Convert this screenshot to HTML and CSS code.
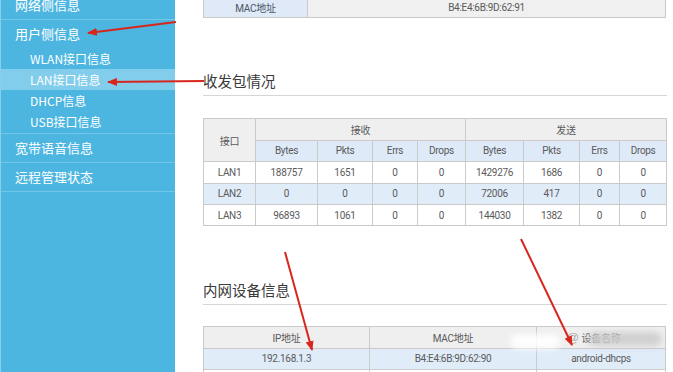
FILE: index.html
```html
<!DOCTYPE html>
<html lang="zh-CN">
<head>
<meta charset="utf-8">
<title>LAN接口信息</title>
<link rel="stylesheet" href="styles.css">
</head>
<body>
<div class="page">
  <aside class="sidebar">
    <ul class="menu">
      <li class="menu-item sep">网络侧信息</li>
      <li class="menu-item">用户侧信息</li>
      <li class="submenu sep">
        <div class="sub-item">WLAN接口信息</div>
        <div class="sub-item active">LAN接口信息</div>
        <div class="sub-item">DHCP信息</div>
        <div class="sub-item">USB接口信息</div>
      </li>
      <li class="menu-item sep">宽带语音信息</li>
      <li class="menu-item sep">远程管理状态</li>
    </ul>
  </aside>
  <main class="main">
    <table class="grid info">
      <colgroup><col class="c-label"><col></colgroup>
      <tr><td class="label">MAC地址</td><td class="value">B4:E4:6B:9D:62:91</td></tr>
    </table>

    <h2 class="section-title first">收发包情况</h2>
    <table class="grid stats">
      <colgroup>
        <col style="width:52px"><col style="width:62px"><col style="width:55px"><col style="width:45px"><col style="width:48px">
        <col style="width:58px"><col style="width:56px"><col style="width:40px"><col style="width:47px">
      </colgroup>
      <tr class="head">
        <td rowspan="2">接口</td>
        <td colspan="4">接收</td>
        <td colspan="4">发送</td>
      </tr>
      <tr class="sub">
        <td>Bytes</td><td>Pkts</td><td>Errs</td><td>Drops</td>
        <td>Bytes</td><td>Pkts</td><td>Errs</td><td>Drops</td>
      </tr>
      <tr><td>LAN1</td><td>188757</td><td>1651</td><td>0</td><td>0</td><td>1429276</td><td>1686</td><td>0</td><td>0</td></tr>
      <tr class="alt"><td>LAN2</td><td>0</td><td>0</td><td>0</td><td>0</td><td>72006</td><td>417</td><td>0</td><td>0</td></tr>
      <tr><td>LAN3</td><td>96893</td><td>1061</td><td>0</td><td>0</td><td>144030</td><td>1382</td><td>0</td><td>0</td></tr>
    </table>

    <h2 class="section-title second">内网设备信息</h2>
    <table class="grid devices">
      <colgroup><col style="width:166px"><col style="width:167px"><col></colgroup>
      <tr class="head"><td>IP地址</td><td>MAC地址</td><td>设备名称</td></tr>
      <tr class="alt"><td>192.168.1.3</td><td>B4:E4:6B:9D:62:90</td><td>android-dhcps</td></tr>
      <tr><td></td><td></td><td></td></tr>
    </table>
  </main>

  <div class="watermark">
    <span class="wm-blob wm-white"></span>
    <span class="wm-blob wm-gray"></span>
    <span class="wm-at">@</span>
  </div>

  <svg class="arrows" width="673" height="372" viewBox="0 0 673 372" aria-hidden="true">
    <defs>
      <marker id="head" viewBox="0 0 10 8" refX="9" refY="4" markerWidth="10" markerHeight="8" markerUnits="userSpaceOnUse" orient="auto">
        <path d="M0 0 L10 4 L0 8 Z" fill="#d8261d"/>
      </marker>
    </defs>
    <line x1="176" y1="22" x2="88" y2="33" stroke="#d8261d" stroke-width="1.8" marker-end="url(#head)"/>
    <line x1="204" y1="81" x2="108" y2="82" stroke="#d8261d" stroke-width="1.8" marker-end="url(#head)"/>
    <line x1="285" y1="252" x2="312" y2="350" stroke="#d8261d" stroke-width="2" marker-end="url(#head)"/>
    <line x1="521" y1="239" x2="572" y2="345" stroke="#d8261d" stroke-width="2" marker-end="url(#head)"/>
  </svg>
</div>
</body>
</html>
```

FILE: styles.css
```css
html, body {
  margin: 0;
  padding: 0;
  background: #ffffff;
}

.page {
  position: relative;
  display: flex;
  height: 372px;
  overflow: hidden;
  font-family: "Noto Sans", "Noto Sans CJK SC", sans-serif;
}

/* ---------- sidebar ---------- */
.sidebar {
  width: 174px;
  flex: none;
  background: #4cb6e1;
  border-left: 1px solid #86d0ee;
  color: #ffffff;
}

.menu {
  list-style: none;
  margin: -9px 0 0 0;
  padding: 0;
}

.menu-item {
  height: 28px;
  line-height: 28px;
  padding-left: 14px;
  font-size: 13px;
  font-family: "Noto Sans CJK SC", sans-serif;
}

.sep {
  border-bottom: 1px solid #72c6e8;
}

.submenu {
  padding-bottom: 1px;
}

.sub-item {
  height: 21px;
  line-height: 21px;
  padding-left: 29px;
  font-size: 12px;
  font-family: "Noto Sans CJK SC", sans-serif;
}

.sub-item.active {
  background: #82cdec;
}

/* ---------- main ---------- */
.main {
  flex: 1;
  padding: 0 7px 0 28px;
}

.grid {
  width: 463px;
  border-collapse: collapse;
  table-layout: fixed;
  font-family: "Roboto", "Noto Sans CJK SC", sans-serif;
  font-size: 10px;
  letter-spacing: -0.3px;
  color: #5a5a5a;
}

.grid td {
  border: 1px solid #cacaca;
  text-align: center;
  height: 20.4px;
  padding: 0;
  white-space: nowrap;
  overflow: hidden;
}

.info {
  margin-top: -4px;
}

.info .c-label {
  width: 104px;
}

.info .label {
  background: #dfe9f7;
  color: #4a5566;
}

.info .value {
  background: #f0f0f0;
}

.section-title {
  margin: 0;
  font-weight: normal;
  font-size: 14.5px;
  line-height: 20px;
  color: #3a3a3a;
  font-family: "Noto Sans CJK SC", sans-serif;
  padding-bottom: 4px;
  border-bottom: 1px solid #d6d6d6;
}

.section-title.first {
  margin-top: 53px;
  margin-bottom: 22px;
}

.section-title.second {
  margin-top: 54px;
  margin-bottom: 21px;
}

.stats .head td {
  background: #efefef;
}

.stats .sub td {
  background: #dfeaf8;
}

.grid .alt td {
  background: #e1ecf9;
}

.devices .head td {
  background: #efefef;
}

/* ---------- overlays ---------- */
.watermark {
  position: absolute;
  left: 0;
  top: 0;
  width: 673px;
  height: 372px;
  pointer-events: none;
}

.wm-blob {
  position: absolute;
  border-radius: 8px;
  filter: blur(3px);
}

.wm-white {
  left: 510px;
  top: 334px;
  width: 50px;
  height: 15px;
  background: rgba(255, 255, 255, 0.9);
}

.wm-gray {
  left: 588px;
  top: 332px;
  width: 74px;
  height: 14px;
  background: rgba(205, 205, 205, 0.9);
}

.wm-at {
  position: absolute;
  left: 566px;
  top: 330px;
  font-family: "Liberation Sans", sans-serif;
  font-size: 13px;
  color: #b0b0b0;
}

.arrows {
  position: absolute;
  left: 0;
  top: 0;
  pointer-events: none;
}
```
